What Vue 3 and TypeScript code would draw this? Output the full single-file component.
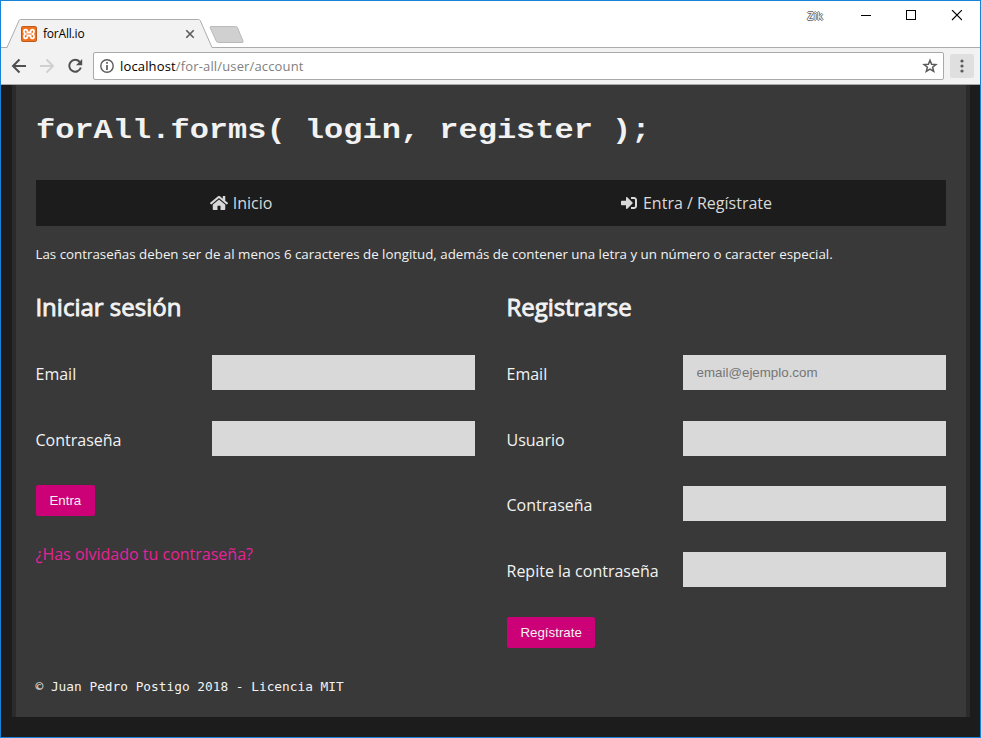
<script setup lang="ts">
interface Field {
  id: string
  label: string
  type: string
  placeholder?: string
}

interface FormDef {
  id: string
  title: string
  fields: Field[]
  action: string
  link?: string
}

const forms: FormDef[] = [
  {
    id: 'login',
    title: 'Iniciar sesión',
    fields: [
      { id: 'login-email', label: 'Email', type: 'email' },
      { id: 'login-pass', label: 'Contraseña', type: 'password' },
    ],
    action: 'Entra',
    link: '¿Has olvidado tu contraseña?',
  },
  {
    id: 'register',
    title: 'Registrarse',
    fields: [
      { id: 'reg-email', label: 'Email', type: 'email', placeholder: 'email@ejemplo.com' },
      { id: 'reg-user', label: 'Usuario', type: 'text' },
      { id: 'reg-pass', label: 'Contraseña', type: 'password' },
      { id: 'reg-repeat', label: 'Repite la contraseña', type: 'password' },
    ],
    action: 'Regístrate',
  },
]
</script>

<template>
  <div class="window">
    <header class="tabstrip">
      <div class="tab">
        <svg class="tab-shape" width="212" height="29" viewBox="0 0 212 29">
          <path d="M6 29L18.200 1.200Q18.500 .5 19.500 .5H197.500Q198.700 .5 199.100 1.300L211.200 29Z" fill="#f2f2f2" />
          <path d="M5.500 28.500H6L18.200 1.200Q18.500 .5 19.500 .5H197.500Q198.700 .5 199.100 1.300L211 28.500H212" fill="none" stroke="#acacac" />
        </svg>
        <svg class="favicon" width="16" height="16" viewBox="0 0 16 16">
          <rect x=".5" y=".5" width="15" height="15" rx="1.200" fill="#f0711f" stroke="#bd5a1c" />
          <path d="M5 3.700C2.500 3.200 2.300 6.700 4.300 8C2.300 9.300 2.500 12.800 5 12.300C6.800 12.300 6.400 9.900 6.400 9.500H9.600C9.600 9.900 9.200 12.300 11 12.300C13.500 12.800 13.700 9.300 11.700 8C13.700 6.700 13.500 3.200 11 3.700C9.200 3.700 9.600 6.100 9.600 6.500H6.400C6.400 6.100 6.800 3.700 5 3.700Z" fill="none" stroke="#fff" stroke-width="1.800" />
        </svg>
        <span class="tab-title">forAll.io</span>
        <svg class="tab-close" width="10" height="10" viewBox="0 0 10 10">
          <path d="M1.300 1.300L8.700 8.700M8.700 1.300L1.300 8.700" stroke="#5a5a5a" stroke-width="1.600" />
        </svg>
      </div>
      <svg class="new-tab" width="36" height="18" viewBox="0 0 36 18">
        <path d="M2 .5H26.500Q28 .5 28.600 1.800L34 15Q34.700 16.500 33 16.500H9.500Q7.800 16.500 7.200 15L1.200 1.800Q.8 .5 2 .5Z" fill="#d0d0d0" stroke="#bababa" />
      </svg>
      <div class="controls">
        <span class="profile">Zik</span>
        <svg width="101" height="12" viewBox="0 0 101 12" fill="none" stroke="#000">
          <path d="M0 5.500H10" />
          <rect x="45.500" y=".5" width="9" height="9" />
          <path d="M91 0L101 10M101 0L91 10" stroke-width="1.100" />
        </svg>
      </div>
    </header>

    <div class="toolbar">
      <svg class="nav-icons" width="74" height="16" viewBox="0 0 74 16" fill="none" stroke-width="2">
        <path d="M16 8H3.500M9.500 1.500L3 8L9.500 14.500" stroke="#505050" />
        <path d="M30 8H42.500M36.500 1.500L43 8L36.500 14.500" stroke="#d0d0d0" />
        <path d="M69.700 4A5.900 5.900 0 1 0 70.800 9.500" stroke="#505050" />
        <path d="M72.200 1V7.200H66Z" fill="#505050" />
      </svg>
      <div class="omnibox">
        <svg width="14" height="14" viewBox="0 0 14 14">
          <circle cx="7" cy="7" r="6.200" fill="none" stroke="#5a5a5a" stroke-width="1.400" />
          <path d="M7 3V4.700M7 6V11" stroke="#5a5a5a" stroke-width="1.700" />
        </svg>
        <span class="url"><b>localhost</b>/for-all/user/account</span>
        <svg class="star" width="16" height="16" viewBox="0 0 16 16">
          <path d="M8 2.300L9.600 6.200L13.900 6.500L10.600 9.200L11.700 13.400L8 11.100L4.300 13.400L5.400 9.200L2.100 6.500L6.400 6.200Z" fill="none" stroke="#5a5a5a" stroke-width="1.500" />
        </svg>
      </div>
      <div class="menu">
        <svg width="4" height="14" viewBox="0 0 4 14" fill="#5a5a5a">
          <circle cx="2" cy="2" r="1.600" />
          <circle cx="2" cy="7" r="1.600" />
          <circle cx="2" cy="12" r="1.600" />
        </svg>
      </div>
    </div>

    <div class="page">
      <main class="panel">
        <h1>forAll.forms( login, register );</h1>
        <nav class="menu-bar">
          <a>
            <svg width="18" height="16" viewBox="0 0 576 512" fill="#d9d9d9">
              <path d="M488 312.700V456c0 13.300-10.700 24-24 24H348c-6.600 0-12-5.400-12-12V356c0-6.600-5.400-12-12-12h-72c-6.600 0-12 5.400-12 12v112c0 6.600-5.400 12-12 12H112c-13.300 0-24-10.700-24-24V312.700c0-3.600 1.600-7 4.400-9.300l188-154.800c4.400-3.600 10.800-3.600 15.300 0l188 154.800c2.700 2.300 4.300 5.700 4.300 9.300zm83.600-60.900L488 182.900V44.400c0-6.600-5.400-12-12-12h-56c-6.600 0-12 5.400-12 12V117l-89.500-73.700c-17.700-14.600-43.300-14.600-61 0L4.400 251.800c-5.100 4.200-5.800 11.800-1.600 16.900l25.500 31c4.200 5.100 11.800 5.800 16.900 1.600l235.200-193.700c4.400-3.600 10.800-3.600 15.300 0l235.200 193.700c5.100 4.200 12.700 3.500 16.900-1.600l25.500-31c4.200-5.200 3.400-12.700-1.700-16.900z" />
            </svg>
            <span>Inicio</span>
          </a>
          <a>
            <svg width="18" height="16" viewBox="-32 0 576 512" fill="#d9d9d9">
              <path d="M416 448h-84c-6.600 0-12-5.400-12-12v-40c0-6.600 5.400-12 12-12h84c17.700 0 32-14.300 32-32V160c0-17.700-14.300-32-32-32h-84c-6.600 0-12-5.400-12-12V76c0-6.600 5.400-12 12-12h84c53 0 96 43 96 96v192c0 53-43 96-96 96zm-47-209L201 71c-15-15-41-4.500-41 17v96H24c-13.300 0-24 10.700-24 24v96c0 13.300 10.700 24 24 24h136v96c0 21.500 26 32 41 17l168-168c9.300-9.400 9.300-24.600 0-34z" />
            </svg>
            <span>Entra / Regístrate</span>
          </a>
        </nav>
        <p class="hint">Las contraseñas deben ser de al menos 6 caracteres de longitud, además de contener una letra y un número o caracter especial.</p>
        <div class="forms">
          <form v-for="form in forms" :key="form.id" @submit.prevent>
            <h2>{{ form.title }}</h2>
            <div v-for="field in form.fields" :key="field.id" class="field">
              <label :for="field.id">{{ field.label }}</label>
              <input :id="field.id" :type="field.type" :placeholder="field.placeholder" />
            </div>
            <button type="submit">{{ form.action }}</button>
            <a v-if="form.link" class="forgot">{{ form.link }}</a>
          </form>
        </div>
        <footer>© Juan Pedro Postigo 2018 - Licencia MIT</footer>
      </main>
    </div>
  </div>
</template>

<style>
body {
  margin: 0;
  overflow: hidden;
}
</style>

<style scoped>
* {
  box-sizing: border-box;
}

.window {
  width: 981px;
  height: 738px;
  display: flex;
  flex-direction: column;
  border: 1px solid #1883d7;
  background: #fff;
  font-family: "Open Sans", "Noto Sans", sans-serif;
}

svg {
  display: block;
  flex: none;
}

.tabstrip {
  height: 47px;
  flex: none;
  display: flex;
  align-items: flex-start;
  border-bottom: 1px solid #acacac;
}

.tab {
  position: relative;
  width: 206px;
  height: 29px;
  margin-top: 18px;
  padding: 0 12px 0 20px;
  display: flex;
  align-items: center;
}

.tab-shape {
  position: absolute;
  left: 0;
  top: 0;
}

.favicon,
.tab-title,
.tab-close {
  position: relative;
}

.tab-title {
  flex: 1;
  margin-left: 6px;
  font-size: 12px;
  line-height: 16px;
  letter-spacing: -0.2px;
  color: #000;
}

.new-tab {
  margin: 25px 0 0 2px;
}

.controls {
  margin: 9px 18px 0 auto;
  display: flex;
  align-items: center;
  gap: 38px;
}

.profile {
  font: 11px/12px "Open Sans", sans-serif;
  letter-spacing: 0.3px;
  color: #fff;
  text-shadow: 1px 0 #666, -1px 0 #666, 0 1px #666, 0 -1px #666;
}

.toolbar {
  height: 37px;
  flex: none;
  display: flex;
  align-items: center;
  padding: 0 6px 0 9px;
  background: #f2f2f2;
  border-bottom: 1px solid #a9a9a9;
}

.omnibox {
  width: 851px;
  height: 28px;
  margin-left: 9px;
  padding: 0 5px 0 6px;
  display: flex;
  align-items: center;
  border: 1px solid #a9a9a9;
  border-radius: 2px;
  background: #fff;
}

.url {
  flex: 1;
  margin-left: 6px;
  font-size: 13px;
  line-height: 18px;
  letter-spacing: 0.15px;
  color: #808080;
}

.url b {
  font-weight: 400;
  color: #000;
}

.menu {
  width: 24px;
  height: 24px;
  margin-left: 6px;
  display: grid;
  place-items: center;
  border-radius: 2px;
  background: #dfdfdf;
}

.page {
  flex: 1;
  padding: 0 10px 20px 11px;
  background: #1c1c1c;
}

.panel {
  height: 632px;
  padding: 0 20px;
  border: solid #2b2b2b;
  border-width: 0 4px;
  background: #393939;
  color: #f2f2f2;
}

h1 {
  margin: 0;
  padding-top: 26px;
  height: 95px;
  font: bold 32px/38px "Courier New", "Liberation Mono", monospace;
  white-space: pre;
  transform: scaleY(0.88);
  transform-origin: 0 53px;
}

.menu-bar {
  height: 46px;
  display: grid;
  grid-template-columns: 410px 1fr;
  background: #1c1c1c;
}

.menu-bar a {
  display: flex;
  align-items: center;
  justify-content: center;
  gap: 5px;
  font-size: 16px;
  color: #d9d9d9;
}

.hint {
  margin: 0 0 0 -0.5px;
  padding-top: 18px;
  height: 60px;
  font-size: 13.333px;
  line-height: 20px;
  white-space: nowrap;
}

.forms {
  height: 386px;
  display: grid;
  grid-template-columns: 439px 439px;
  gap: 32px;
}

form {
  display: flex;
  flex-direction: column;
  align-items: flex-start;
}

h2 {
  margin: 0 0 28px -0.6px;
  height: 41px;
  font-size: 24px;
  line-height: 41px;
  font-weight: 400;
  -webkit-text-stroke: 0.9px #f2f2f2;
}

.field {
  width: 100%;
  height: 35px;
  margin-bottom: 30.6px;
  display: grid;
  grid-template-columns: 2fr 3fr;
  align-items: center;
}

label {
  margin-left: -0.5px;
  padding-top: 3px;
  font-size: 16px;
  line-height: 22px;
}

input {
  width: 100%;
  height: 35px;
  padding: 0 14px;
  border: 0;
  border-radius: 0;
  background: #d9d9d9;
  font: 13.333px "Liberation Sans", Arial, sans-serif;
}

input::placeholder {
  color: #757575;
}

button {
  height: 31px;
  margin-top: -0.8px;
  padding: 0 13.4px;
  border: 0;
  border-radius: 2px;
  background: #cc0077;
  color: #f2f2f2;
  font: 13.333px "Liberation Sans", Arial, sans-serif;
}

.forgot {
  margin: 26px 0 0 -0.5px;
  font-size: 16px;
  line-height: 24px;
  color: #e6229a;
}

footer {
  margin-left: -0.5px;
  padding-top: 5px;
  font: 12.8px/20px "DejaVu Sans Mono", monospace;
  white-space: pre;
}
</style>
